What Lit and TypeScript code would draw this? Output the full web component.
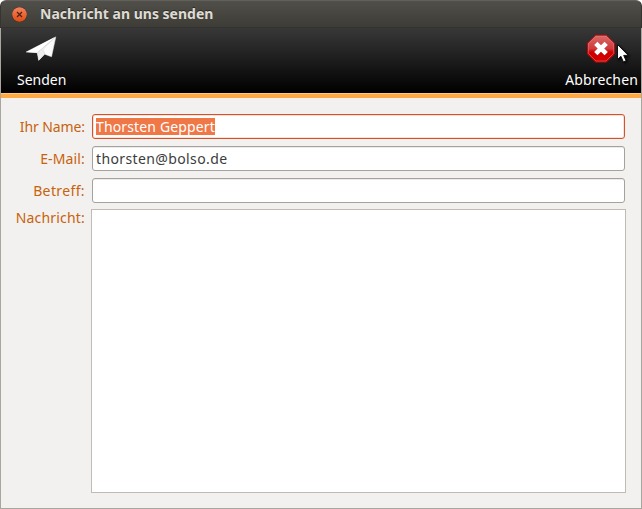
import { LitElement, html, css, svg } from "lit";
import { customElement, property } from "lit/decorators.js";

@customElement("form-row")
class FormRow extends LitElement {
  @property() label = "";
  @property() value = "";
  @property({ type: Boolean }) active = false;
  @property() labelSpacing = "0px";
  @property() valueSpacing = "0px";

  static styles = css`
    :host { display: flex; height: 25px; margin-bottom: 7px; }
    .label { width: 84px; margin-right: 6px; text-align: right; color: #c8620a; line-height: 26px; white-space: nowrap; }
    .box { flex: 1; margin: 0 1px; box-sizing: border-box; border: 1px solid #a5a19b; border-radius: 3px; background: #fff; padding: 3px 3px; color: #3c3c3c; box-shadow: inset 0 1px 0 #ecebe9; line-height: 18px; white-space: nowrap; }
    .active { border-color: #d4522a; box-shadow: inset 0 0 0 1px #fbe0d6; }
    .value { display: block; width: max-content; height: 17px; }
    .active .value { background: #f07746; color: #fff; }
  `;

  render() {
    return html`
      <div class="label" style="letter-spacing:${this.labelSpacing}">${this.label}</div>
      <div class="box ${this.active ? "active" : ""}"><span class="value" style="letter-spacing:${this.valueSpacing}">${this.value}</span></div>
    `;
  }
}

@customElement("app-root")
class AppRoot extends LitElement {
  static styles = css`
    :host { display: block; width: 642px; height: 509px; background: #fff; font: 14px/18px "Noto Sans", "Open Sans", sans-serif; }
    .window { display: flex; flex-direction: column; height: 509px; border-radius: 6px 6px 0 0; overflow: hidden; background: #a9a6a0; }
    .titlebar { display: flex; align-items: center; flex: none; box-sizing: border-box; height: 28px; padding-left: 12px; border: 1px solid #36352f; border-top-color: #62605a; border-radius: 6px 6px 0 0; border-bottom-color: #33322e; background: linear-gradient(#504f49, #3d3c37); color: #dfdbd2; }
    .close { width: 15px; height: 15px; margin: 1px 0 0 -1px; }
    .title { margin: -1px 0 0 13px; font-weight: 700; white-space: nowrap; text-shadow: 0 -1px 0 #2c2b28; }
    .client { display: flex; flex-direction: column; flex: 1; margin: 0 1px 1px; background: #f2f1f0; }
    .toolbar { display: flex; justify-content: space-between; height: 65px; box-sizing: border-box; padding: 6px 3px 0 16px; background: linear-gradient(#383838, #000); color: #fff; }
    .tool { display: flex; flex-direction: column; white-space: nowrap; }
    .tool svg { display: block; width: 32px; height: 30px; overflow: visible; }
    .send svg { margin-left: 8px; }
    .cancel svg { margin-left: 22px; }
    .caption { margin-top: 7px; }
    .cancel .caption { letter-spacing: .15px; }
    .stripe { height: 5px; box-sizing: border-box; border-top: 1px solid #ffc87c; background: #fdaa45; }
    .form { padding: 16px 15px 15px 0; display: flex; flex-direction: column; flex: 1; }
    .message { display: flex; flex: 1; margin-top: -1px; }
    .label { width: 84px; margin-right: 6px; text-align: right; color: #c8620a; letter-spacing: .18px; }
    .area { flex: 1; box-sizing: border-box; border: 1px solid #bfbbb5; background: #fff; }
    .pointer { position: absolute; left: 616px; top: 43px; width: 14px; height: 22px; filter: drop-shadow(1px 1px 1px #000); }
  `;

  private closeIcon = svg`
    <defs><linearGradient id="c" x2="0" y2="1"><stop stop-color="#f6845c"/><stop offset="1" stop-color="#e04b13"/></linearGradient></defs>
    <circle cx="7.5" cy="7.5" r="7.8" fill="#35322c"/>
    <circle cx="7.5" cy="7.5" r="7.3" fill="url(#c)"/>
    <path d="M5 5l5 5M10 5l-5 5" stroke="#4a2116" stroke-width="1.2"/>`;

  private planeIcon = svg`
    <path d="M1.2 18L30.8 2.9 26.5 22.7 19.7 20.2 13.7 26.4 12.3 18.7z" fill="#f2f2f2" stroke="#dadada" stroke-width=".6"/>
    <path d="M30 3L1.5 18l11 .7z" fill="#fff"/>
    <path d="M30 3L12.3 18.5l1.4 7.7 6-6.4-1.7-3.3z" fill="#ececec"/>
    <path d="M29.5 4L18 16.5l1.7 3.3 6.6 2.4z" fill="#fafafa"/>
    <path d="M28.5 5L12.5 18.5M18 16l2 4" fill="none" stroke="#cfcfcf" stroke-width=".6"/>`;

  private stopIcon = svg`
    <defs><linearGradient id="r" x2="0" y2="1"><stop stop-color="#d96a6a"/><stop offset=".5" stop-color="#cf3a3a"/><stop offset=".62" stop-color="#cc0000"/><stop offset="1" stop-color="#d40000"/></linearGradient></defs>
    <path d="M7.6 1.4h10.8l8.1 8v10.9l-8.1 8H7.6l-8.1-8V9.4z" transform="translate(1 -.2)" fill="url(#r)" stroke="#b80a0a" stroke-width="1"/>
    <path d="M9 2.2h10l7.4 7.4v10L19 27H9l-7.4-7.4v-10z" fill="none" stroke="#ee8080" stroke-opacity=".55" stroke-width=".9"/>
    <path d="M9 9.5l10.4 10.4M19.4 9.5L9 19.9" transform="translate(-.2 -.2)" stroke="#fff" stroke-width="4.6"/>`;

  render() {
    return html`
      <div class="window">
        <div class="titlebar">
          <svg class="close" viewBox="0 0 15 15">${this.closeIcon}</svg>
          <div class="title">Nachricht an uns senden</div>
        </div>
        <div class="client">
          <div class="toolbar">
            <div class="tool send">
              <svg viewBox="0 0 32 30">${this.planeIcon}</svg>
              <div class="caption">Senden</div>
            </div>
            <div class="tool cancel">
              <svg viewBox="0 0 32 30">${this.stopIcon}</svg>
              <div class="caption">Abbrechen</div>
            </div>
          </div>
          <div class="stripe"></div>
          <div class="form">
            <form-row label="Ihr Name:" labelSpacing="-0.1px" value="Thorsten Geppert" valueSpacing="0.14px" active></form-row>
            <form-row label="E-Mail:" labelSpacing="0.15px" value="thorsten@bolso.de" valueSpacing="0.38px"></form-row>
            <form-row label="Betreff:" labelSpacing="0.38px"></form-row>
            <div class="message">
              <div class="label">Nachricht:</div>
              <div class="area"></div>
            </div>
          </div>
        </div>
      </div>
      <svg class="pointer" viewBox="0 0 14 22">
        <path d="M1.5 1.5v15l3.4-3.2 2.5 5.6 2.7-1.2-2.4-5.3h4.6z" fill="#fff" stroke="#111" stroke-width="1"/>
      </svg>
    `;
  }
}
